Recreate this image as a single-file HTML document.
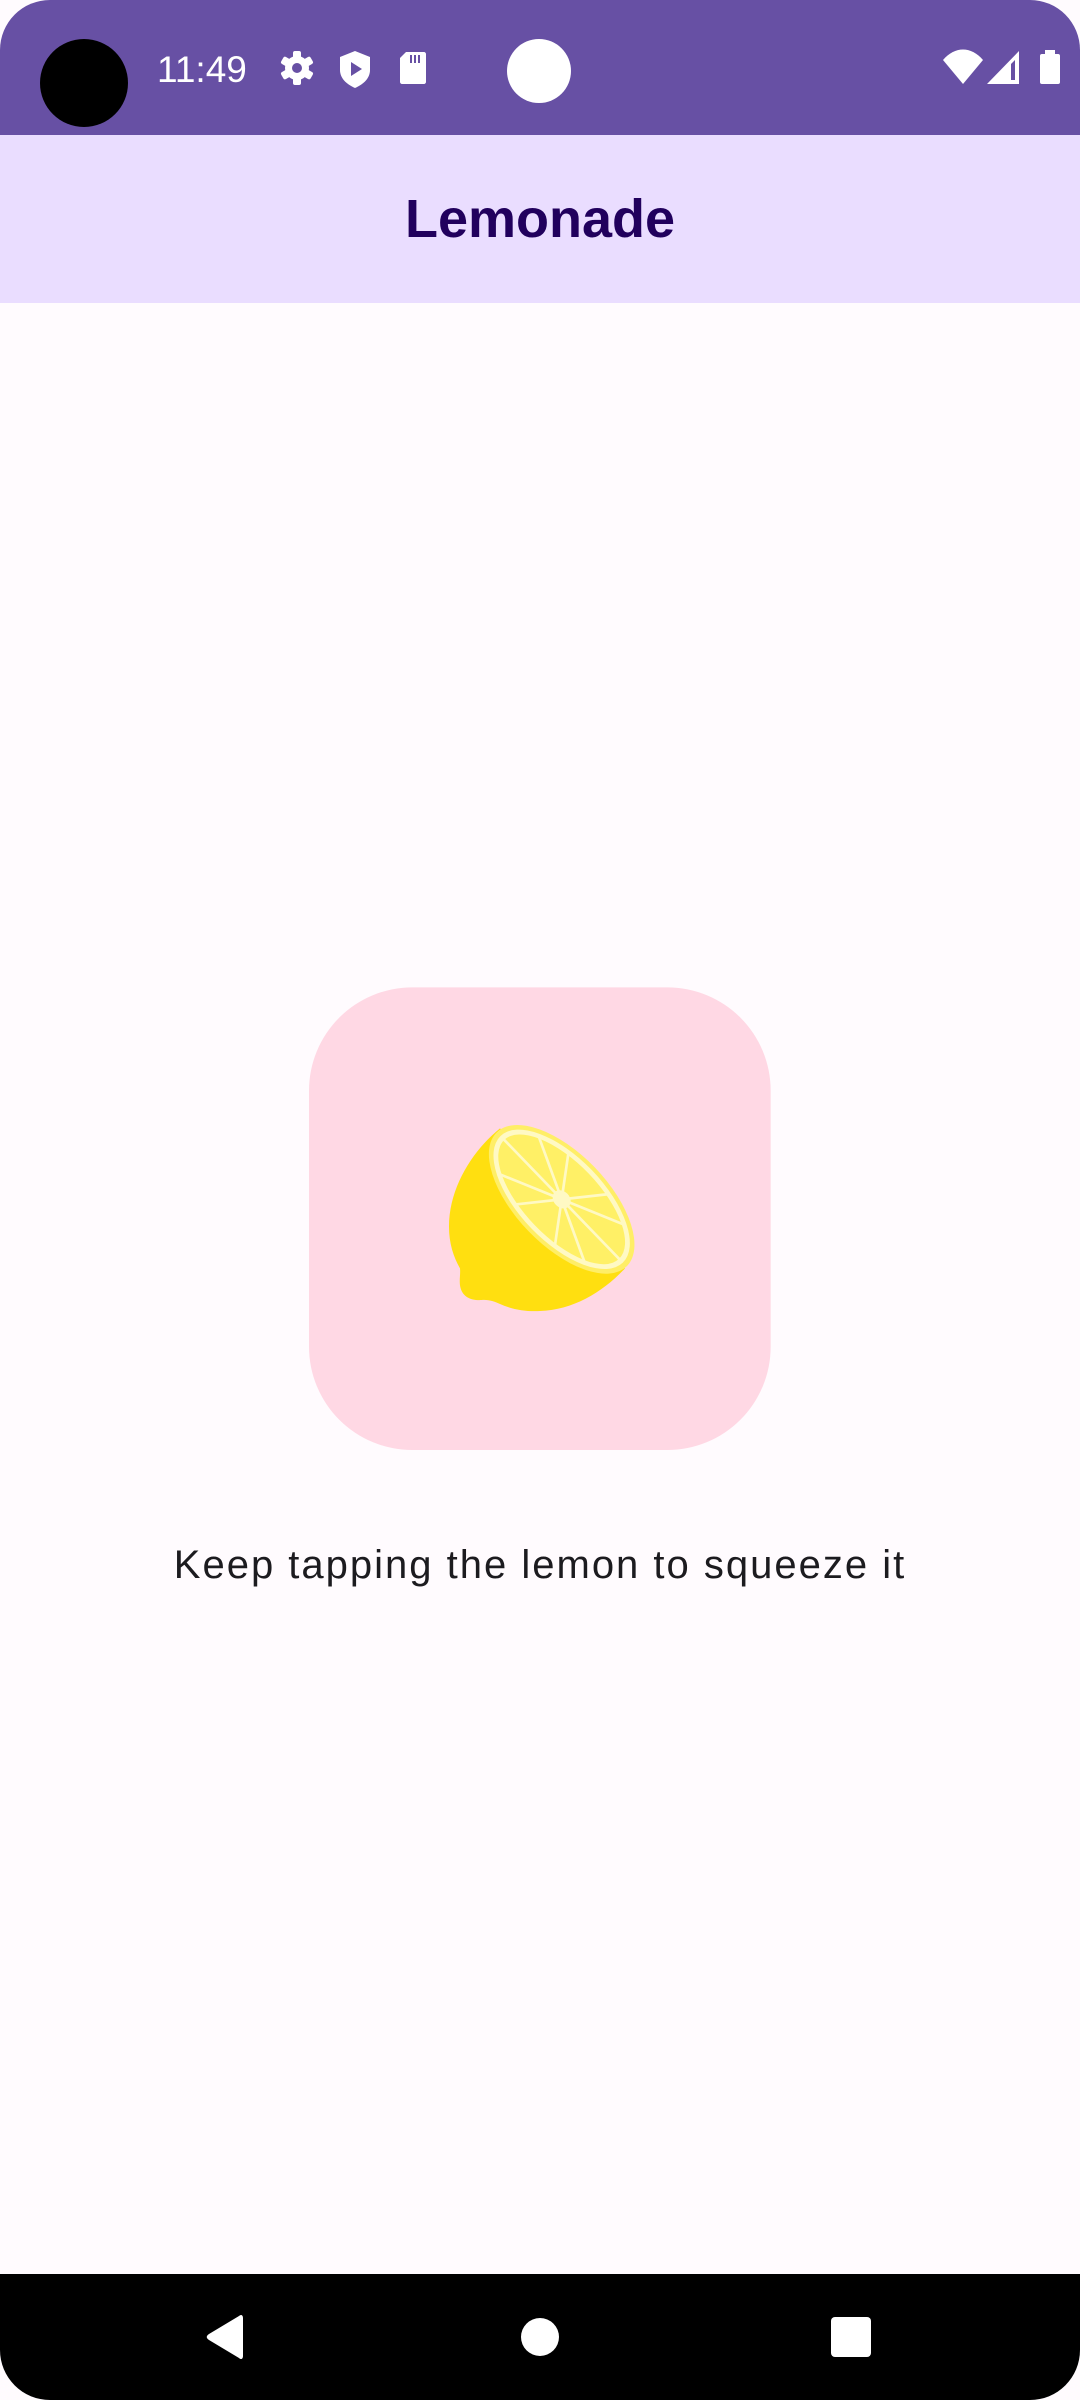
<!DOCTYPE html>
<html><head><meta charset="utf-8">
<style>
html,body{margin:0;padding:0;}
body{width:1080px;height:2400px;position:relative;overflow:hidden;background:#FFFBFE;font-family:"Liberation Sans",sans-serif;}
.status{position:absolute;left:0;top:0;width:1080px;height:135px;background:#6750A4;border-radius:50px 50px 0 0;}
.appbar{position:absolute;left:0;top:135px;width:1080px;height:168px;background:#EADDFF;}
.title{position:absolute;left:0;width:1080px;top:184px;text-align:center;font-size:54px;font-weight:bold;color:#21005D;line-height:70px;}
.msg{position:absolute;left:0;width:1080px;top:1535px;text-align:center;font-size:40px;color:#1C1B1F;letter-spacing:2px;line-height:60px;}
.nav{position:absolute;left:0;top:2274px;width:1080px;height:126px;background:#000;border-radius:0 0 50px 50px;}
</style></head><body>
<div class="status"></div>
<svg style="position:absolute;left:0;top:0" width="1080" height="135">
 <circle cx="84" cy="83" r="44" fill="#000"/>
 <text x="157" y="82" font-family="Liberation Sans" font-size="37" fill="#fff">11:49</text>
 <g transform="translate(297,68)" fill="#fff">
  <circle r="12"/>
  <g><rect x="-4" y="-17" width="8" height="34" rx="2"/><rect x="-4" y="-17" width="8" height="34" rx="2" transform="rotate(60)"/><rect x="-4" y="-17" width="8" height="34" rx="2" transform="rotate(120)"/></g>
  <circle r="5" fill="#6750A4"/>
 </g>
 <path d="M355 51 L370 57 V70 C370 78 364 84 355 88 C346 84 340 78 340 70 V57 Z" fill="#fff"/>
 <path d="M351 62 L362 69 L351 76 Z" fill="#6750A4"/>
 <path d="M406 52 H424 C425 52 426 53 426 54 V82 C426 83 425 84 424 84 H402 C401 84 400 83 400 82 V58 Z" fill="#fff"/>
 <rect x="410" y="55" width="2" height="8" fill="#6750A4"/><rect x="414" y="55" width="2" height="8" fill="#6750A4"/><rect x="418" y="55" width="2" height="8" fill="#6750A4"/>
 <circle cx="539" cy="71" r="32" fill="#fff"/>
 <path d="M943 60 C955 46 971 46 983 60 L963 84 Z" fill="#fff"/>
 <path d="M1019 51 V84 H987 Z" fill="#fff"/>
 <path d="M1015 60 V80 H1011 V64 Z" fill="#6750A4"/>
 <rect x="1040" y="54" width="20" height="30" rx="2" fill="#fff"/><rect x="1045" y="50" width="10" height="6" fill="#fff"/>
</svg>
<div class="appbar"></div>
<div class="title">Lemonade</div>

<svg style="position:absolute;left:300px;top:980px" width="480" height="480" viewBox="0 0 1440 1440">
 <rect x="27" y="22" width="1385" height="1388" rx="310" fill="#FFD8E4"/>
 <path d="M600 445 C520 510 447 620 447 740 C447 790 460 830 480 865 C482 885 476 905 482 925 C490 952 515 962 545 960 C565 958 585 965 600 972 C640 990 680 995 720 993 C820 990 910 935 975 865 Z" fill="#FFDF10"/>
 <g transform="translate(785,658) rotate(46)">
  <ellipse rx="280" ry="138" fill="#FFEE66"/>
  <ellipse rx="264" ry="126" fill="#FFF9C4"/>
  <ellipse rx="248" ry="112" fill="#FFF066"/>
  <g stroke="#FFF9C4" stroke-width="8">
   <line x1="-250" y1="0" x2="250" y2="0"/>
   <line x1="-180" y1="-80" x2="180" y2="80"/>
   <line x1="-180" y1="80" x2="180" y2="-80"/>
   <line x1="-85" y1="-110" x2="85" y2="110"/>
   <line x1="-85" y1="110" x2="85" y2="-110"/>
  </g>
  <ellipse rx="30" ry="24" fill="#FFF9C4"/>
 </g>
</svg>

<div class="msg">Keep tapping the lemon to squeeze it</div>

<div class="nav"></div>
<svg style="position:absolute;left:0;top:2274px" width="1080" height="126">
 <path d="M243 44 V82 C243 85 241 86 239 84 L209 66 C206 64 206 62 209 60 L239 42 C241 40 243 41 243 44 Z" fill="#fff"/>
 <circle cx="540" cy="63" r="19" fill="#fff"/>
 <rect x="831" y="43" width="40" height="40" rx="4" fill="#fff"/>
</svg>
</body></html>
